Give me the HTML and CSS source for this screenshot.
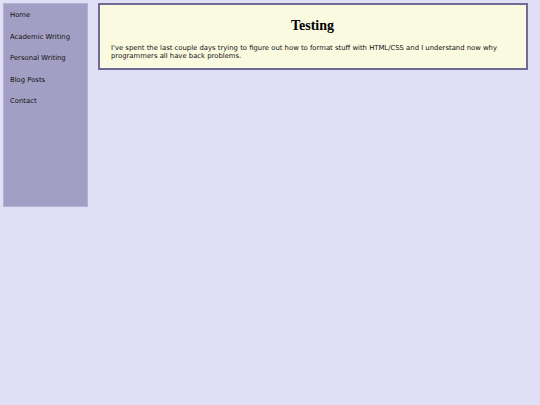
FILE: index.html
```html
<!DOCTYPE html>
<html>
<head>
<meta charset="utf-8">
<link rel="stylesheet" href="styles.css">
</head>
<body>
<div class="page">
  <nav class="sidebar">
    <a class="nav-item" href="#">Home</a>
    <a class="nav-item" href="#">Academic Writing</a>
    <a class="nav-item" href="#">Personal Writing</a>
    <a class="nav-item" href="#">Blog Posts</a>
    <a class="nav-item" href="#">Contact</a>
  </nav>
  <main class="content">
    <h1 class="title">Testing</h1>
    <p class="text">I've spent the last couple days trying to figure out how to format stuff with HTML/CSS and I understand now why programmers all have back problems.</p>
  </main>
</div>
</body>
</html>
```
FILE: styles.css
```css
html, body {
  margin: 0;
  padding: 0;
  background: #e1dff6;
}
body {
  font-family: "DejaVu Sans", Verdana, sans-serif;
  font-size: 6.85px;
  color: #111;
}
.page {
  display: flex;
  align-items: flex-start;
  gap: 10px;
  padding: 3px 12px 0 3px;
}
.sidebar {
  width: 83px;
  height: 196px;
  flex: none;
  background: #a39fc4;
  border: 1px solid #b3b0d3;
  display: flex;
  flex-direction: column;
  padding-top: 6px;
  box-sizing: content-box;
}
.nav-item {
  display: block;
  color: #111;
  text-decoration: none;
  padding: 0 0 0 6px;
  height: 21.5px;
  line-height: 10px;
}
.content {
  flex: 1;
  background: #fafae0;
  border: 2px solid #6f6b94;
  padding: 0 12px 8px 11px;
}
.title {
  font-family: "Liberation Serif", "Times New Roman", serif;
  font-weight: bold;
  font-size: 14px;
  text-align: center;
  margin: 13px 0 10px;
  line-height: 16px;
  color: #000;
}
.text {
  margin: 0;
  line-height: 8px;
}
```
